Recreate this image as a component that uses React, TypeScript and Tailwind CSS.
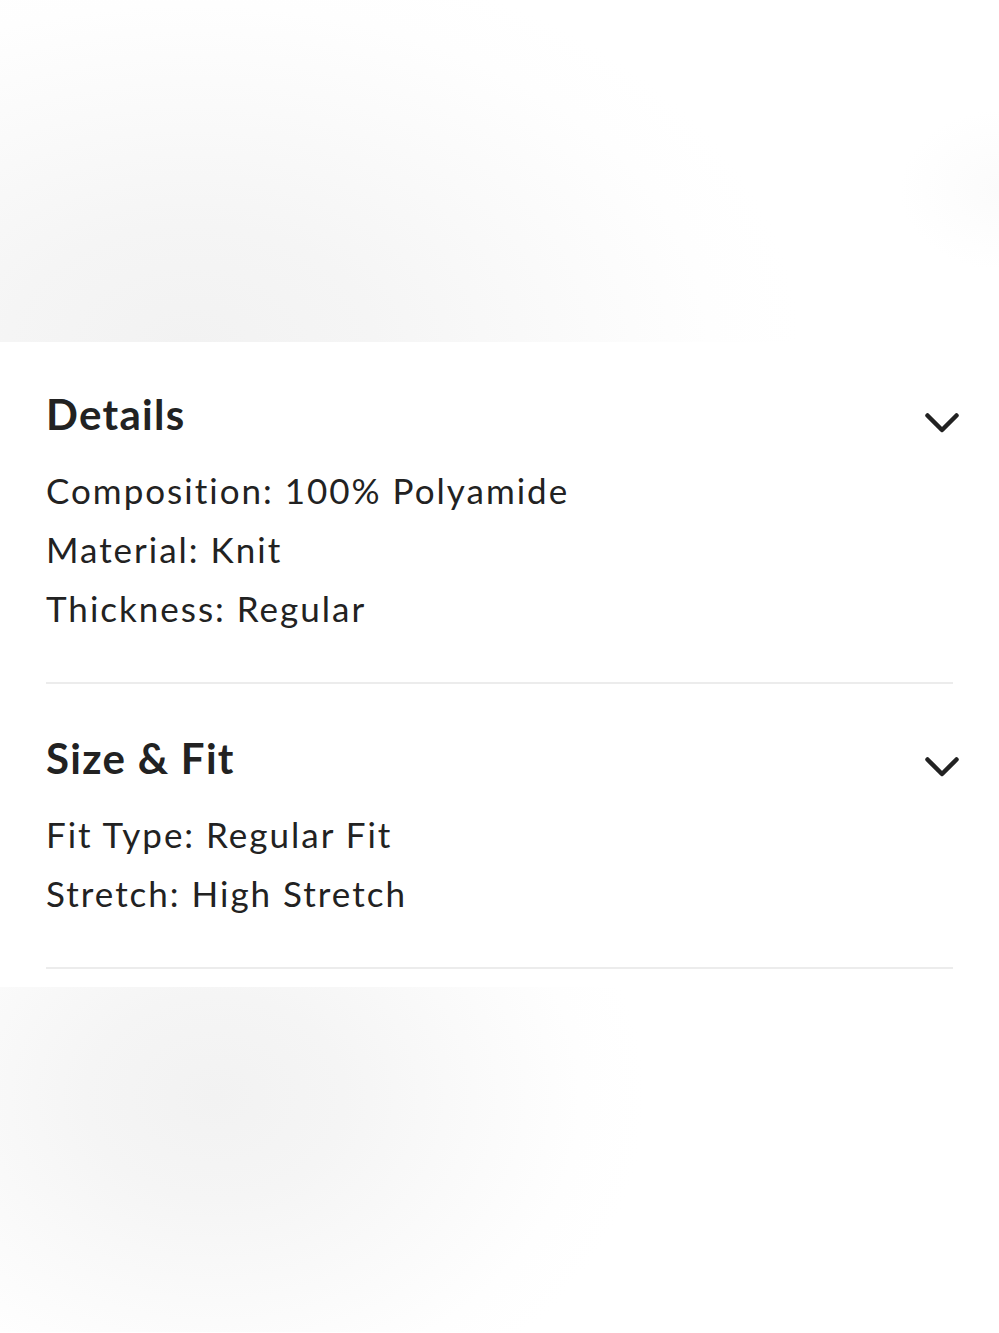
const sections = [
  {
    title: "Details",
    lines: ["Composition: 100% Polyamide", "Material: Knit", "Thickness: Regular"],
  },
  {
    title: "Size & Fit",
    lines: ["Fit Type: Regular Fit", "Stretch: High Stretch"],
  },
];

function Chevron() {
  return (
    <svg width="34" height="21" viewBox="0 0 34 21" fill="none" className="mr-[-6px] mt-[23px] shrink-0">
      <polyline
        points="2.5,2.5 17,17 31.5,2.5"
        stroke="#222222"
        strokeWidth="4.5"
        strokeLinecap="round"
        strokeLinejoin="round"
      />
    </svg>
  );
}

export default function App() {
  return (
    <div className="min-h-[1333px] w-full bg-white font-['Lato',sans-serif] text-[#222222] [font-variant-ligatures:none]">
      {/* blurred product photo behind the sheet */}
      <div className="h-[342px] w-full bg-[radial-gradient(ellipse_100px_80px_at_1000px_190px,#fbfbfb_0%,#ffffff00_100%),radial-gradient(ellipse_610px_400px_at_190px_345px,#f2f2f2_0%,#f5f5f5_30%,#fafafa_60%,#fefefe_85%,#ffffff_100%)]" />

      <div className="bg-white px-[46px] pb-[18px]">
        {sections.map((s, i) => (
          <section
            key={s.title}
            className={`border-b-2 border-[#ececec] pb-[44px] ${i === 0 ? "pt-[48px]" : "pt-[50px]"}`}
          >
            <div className="flex items-start justify-between">
              <h2 className="text-[42px] font-bold leading-[48px] tracking-[1.3px]">{s.title}</h2>
              <Chevron />
            </div>
            <div className="mt-[23px]">
              {s.lines.map((l) => (
                <p key={l} className="text-[35px] leading-[59px] tracking-[2px]">
                  {l}
                </p>
              ))}
            </div>
          </section>
        ))}
      </div>

      <div className="h-[345px] w-full bg-[radial-gradient(ellipse_430px_340px_at_215px_110px,#f2f2f2_0%,#f5f5f5_30%,#fafafa_60%,#fefefe_85%,#ffffff_100%)]" />
    </div>
  );
}
